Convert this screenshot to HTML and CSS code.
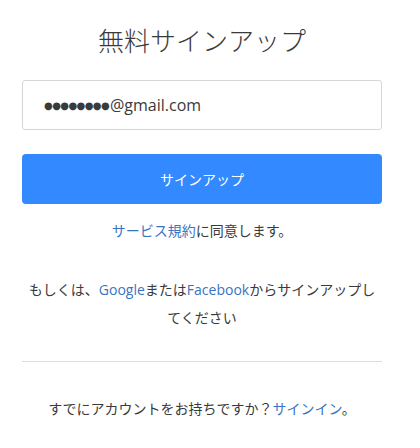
FILE: index.html
```html
<!DOCTYPE html>
<html lang="ja">
<head>
<meta charset="utf-8">
<title>無料サインアップ</title>
<link rel="stylesheet" href="styles.css">
</head>
<body>
<main class="signup">
  <h1 class="signup-title">無料サインアップ</h1>
  <div class="email-field"><span class="dots">●●●●●●●●</span>@gmail.com</div>
  <button class="signup-btn" type="button">サインアップ</button>
  <p class="terms"><a href="#">サービス規約</a>に同意します。</p>
  <p class="social">もしくは、<a href="#">Google</a>または<a href="#">Facebook</a>からサインアップしてください</p>
  <hr class="divider">
  <p class="signin">すでにアカウントをお持ちですか？<a href="#">サインイン</a>。</p>
</main>
</body>
</html>
```
FILE: styles.css
```css
html, body {
  margin: 0;
  padding: 0;
  background: #ffffff;
}
body {
  font-family: "Open Sans", "Noto Sans CJK JP", sans-serif;
  color: #3a3a3a;
  font-size: 14px;
}
.signup {
  width: 360px;
  margin-left: 22px;
  padding-top: 26px;
  display: flex;
  flex-direction: column;
}
.signup-title {
  margin: 0 0 24px;
  font-size: 26px;
  line-height: 30px;
  font-weight: 300;
  text-align: center;
  color: #3a3a3a;
}
.email-field {
  box-sizing: border-box;
  height: 50px;
  border: 1px solid #d6d6d6;
  border-radius: 3px;
  padding: 0 21px;
  display: flex;
  align-items: center;
  font-size: 16px;
  color: #3a3a3a;
}
.dots {
  font-family: "DejaVu Sans", sans-serif;
  font-size: 10px;
  letter-spacing: -0.6px;
  margin-right: 1px;
}
.signup-btn {
  margin-top: 24px;
  height: 50px;
  border: none;
  border-radius: 4px;
  background: #3389ff;
  color: #ffffff;
  font-family: "Open Sans", "Noto Sans CJK JP", sans-serif;
  font-size: 14px;
}
.terms, .social, .signin {
  margin: 0;
  text-align: center;
  line-height: 28px;
}
.terms {
  margin-top: 13px;
}
.social {
  margin-top: 31px;
  padding: 0 6px;
}
a {
  color: #3a74c0;
  text-decoration: none;
}
.divider {
  margin: 29px 0 0;
  border: none;
  border-top: 1px solid #dcdcdc;
  height: 0;
}
.signin {
  margin-top: 33px;
}
```
